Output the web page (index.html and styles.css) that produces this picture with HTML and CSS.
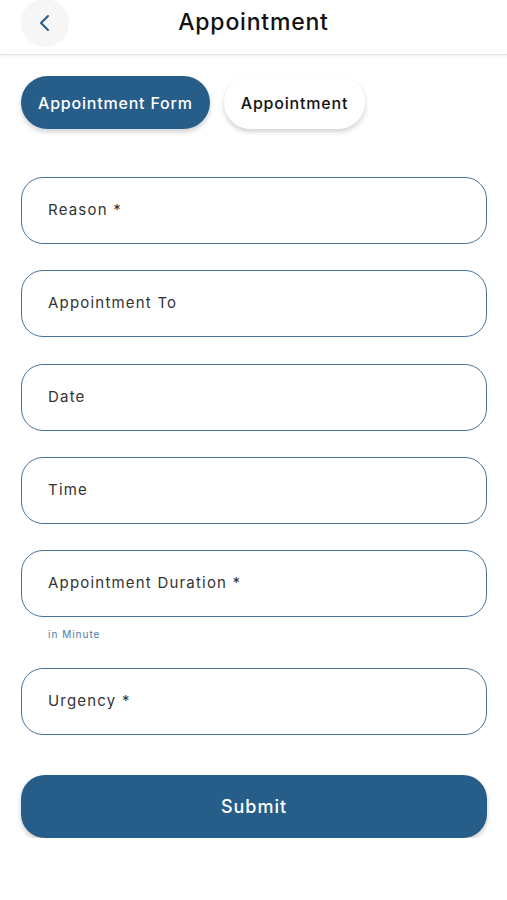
FILE: index.html
```html
<!DOCTYPE html>
<html lang="en">
<head>
  <meta charset="UTF-8" />
  <title>Appointment</title>
  <link rel="stylesheet" href="styles.css">
</head>
<body>
  <header class="topbar">
    <button class="back-btn" aria-label="Back">
      <svg width="16" height="20" viewBox="0 0 16 20"><path d="M11 3 L4 10 L11 17" fill="none" stroke="#275d89" stroke-width="2" stroke-linecap="round" stroke-linejoin="round"/></svg>
    </button>
    <h1 class="title">Appointment</h1>
  </header>

  <div class="tabs">
    <button class="tab active">Appointment Form</button>
    <button class="tab">Appointment</button>
  </div>

  <form class="form">
    <div class="field"><span class="label">Reason *</span></div>
    <div class="field"><span class="label">Appointment To</span></div>
    <div class="field"><span class="label">Date</span></div>
    <div class="field"><span class="label">Time</span></div>
    <div class="group">
      <div class="field"><span class="label">Appointment Duration *</span></div>
      <p class="hint">in Minute</p>
    </div>
    <div class="field"><span class="label">Urgency *</span></div>
    <button type="button" class="submit">Submit</button>
  </form>
</body>
</html>
```

FILE: styles.css
```css
* {
  box-sizing: border-box;
}
body {
  margin: 0;
  background: #fff;
  font-family: Inter, "Open Sans", sans-serif;
  color: #222;
}
.topbar {
  position: relative;
  height: 55px;
  display: flex;
  align-items: center;
  justify-content: center;
  border-bottom: 1px solid #e4e4e4;
  box-shadow: 0 1px 3px rgba(0, 0, 0, 0.08);
}
.back-btn {
  position: absolute;
  left: 21px;
  top: -1px;
  width: 48px;
  height: 48px;
  border-radius: 50%;
  border: none;
  background: #f6f6f6;
  display: flex;
  align-items: center;
  justify-content: center;
  padding: 0;
}
.title {
  margin: -10px 0 0;
  font-size: 23px;
  font-weight: 500;
  letter-spacing: 0.8px;
  color: #111;
}
.tabs {
  display: flex;
  gap: 14px;
  padding: 21px 21px 0;
}
.tab {
  height: 53px;
  padding: 0 17px;
  border: none;
  border-radius: 27px;
  background: #fff;
  color: #111;
  font-family: inherit;
  font-size: 16px;
  font-weight: 500;
  letter-spacing: 0.8px;
  box-shadow: 0 3px 5px rgba(0, 0, 0, 0.18);
}
.tab.active {
  background: #275d89;
  color: #fff;
}
.form {
  display: flex;
  flex-direction: column;
  gap: 26.3px;
  padding: 48px 20px 0 21px;
}
.field {
  height: 67px;
  border: 1.5px solid #4a739b;
  border-radius: 22px;
  display: flex;
  align-items: center;
  padding: 0 26px;
}
.label {
  font-size: 15px;
  color: #333;
  letter-spacing: 1.2px;
  margin-top: -2px;
}
.hint {
  margin: 11px 0 2px 27px;
  font-size: 10px;
  color: #4a7aa8;
  letter-spacing: 1px;
}
.submit {
  margin-top: 13px;
  height: 63px;
  border: none;
  border-radius: 24px;
  background: #275d89;
  color: #fff;
  font-family: inherit;
  font-size: 18px;
  font-weight: 500;
  letter-spacing: 1px;
  box-shadow: 0 3px 5px rgba(0, 0, 0, 0.2);
}
```
